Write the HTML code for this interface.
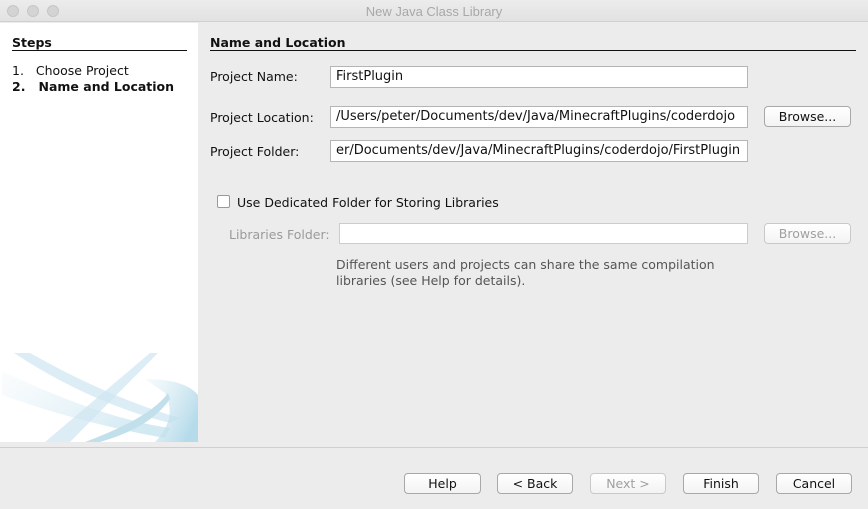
<!DOCTYPE html>
<html><head><style>
*{margin:0;padding:0;box-sizing:border-box}
body{width:868px;height:509px;background:#ececec;font-family:"DejaVu Sans","Liberation Sans",sans-serif;font-size:12.5px;color:#111;position:relative;overflow:hidden}
.a{position:absolute;white-space:nowrap}
.tb{left:0;top:0;width:868px;height:22px;background:linear-gradient(#ececec,#e2e2e2);border-bottom:1px solid #d0d0d0}
.dot{width:12px;height:12px;border-radius:50%;background:#d4d4d4;border:1px solid #c6c6c6;top:5px}
.inp{background:#fff;border:1px solid #b5b5b5;height:22px;padding:2px 5px;line-height:16px;overflow:hidden;font-size:13px}
.btn{background:linear-gradient(#fff,#f3f3f3);border:1px solid #a8a8a8;border-radius:4px;height:21px;text-align:center;line-height:19px;font-size:12.5px}
.dis{color:#a0a0a0;border-color:#c9c9c9}
</style></head><body>
<div class="a tb"></div>
<div class="a dot" style="left:7px"></div>
<div class="a dot" style="left:27px"></div>
<div class="a dot" style="left:47px"></div>
<div class="a" style="left:0;width:868px;top:4px;text-align:center;color:#a8a8a8;font-family:'Liberation Sans',sans-serif;font-size:13px">New Java Class Library</div>

<div class="a" style="left:0;top:23px;width:198px;height:419px;background:#fff;overflow:hidden">
<svg width="198" height="419" style="position:absolute;left:0;top:0">
<defs><linearGradient id="g" x1="0" x2="1" y1="0" y2="0.6"><stop offset="0" stop-color="#d8ebf4" stop-opacity="0.2"/><stop offset="1" stop-color="#b5dbea"/></linearGradient></defs>
<path d="M2 348 Q100 395 170 405 L165 415 Q80 400 2 372Z" fill="url(#g)" opacity="0.6"/>
<path d="M14 330 L30 330 Q110 375 180 395 L170 400 Q90 380 14 330Z" fill="#cde6f1" opacity="0.7"/>
<path d="M45 419 L150 330 L158 330 L70 419Z" fill="#cfe6f1" opacity="0.7"/>
<path d="M145 356 Q185 356 198 372 L198 419 L155 419 Q178 395 165 370Z" fill="url(#g)"/>
<path d="M85 419 Q150 395 168 370 L170 376 Q150 405 100 419Z" fill="#c2e0ec"/>
</svg>
</div>

<div class="a" style="left:12px;top:35px;font-weight:bold">Steps</div>
<div class="a" style="left:12px;top:50px;width:175px;height:1px;background:#111"></div>
<div class="a" style="left:12px;top:63px">1.&nbsp;&nbsp;&nbsp;Choose Project</div>
<div class="a" style="left:12px;top:79px;font-weight:bold">2.&nbsp;&nbsp;&nbsp;Name and Location</div>

<div class="a" style="left:210px;top:35px;font-weight:bold">Name and Location</div>
<div class="a" style="left:210px;top:50px;width:646px;height:1px;background:#111"></div>

<div class="a" style="left:210px;top:69px">Project Name:</div>
<div class="a inp" style="left:330px;top:66px;width:418px">FirstPlugin</div>
<div class="a" style="left:210px;top:110px">Project Location:</div>
<div class="a inp" style="left:330px;top:106px;width:418px">/Users/peter/Documents/dev/Java/MinecraftPlugins/coderdojo</div>
<div class="a btn" style="left:764px;top:106px;width:87px">Browse...</div>
<div class="a" style="left:210px;top:144px">Project Folder:</div>
<div class="a inp" style="left:330px;top:140px;width:418px;direction:rtl;text-align:left">er/Documents/dev/Java/MinecraftPlugins/coderdojo/FirstPlugin</div>

<div class="a" style="left:217px;top:195px;width:13px;height:13px;border:1px solid #999;border-radius:2px;background:#fff"></div>
<div class="a" style="left:237px;top:195px">Use Dedicated Folder for Storing Libraries</div>
<div class="a" style="left:229px;top:227px;color:#9a9a9a">Libraries Folder:</div>
<div class="a inp" style="left:339px;top:223px;width:409px;height:21px;border-color:#ccc"></div>
<div class="a btn dis" style="left:764px;top:223px;width:87px">Browse...</div>
<div class="a" style="left:336px;top:257px;color:#555;line-height:16px">Different users and projects can share the same compilation<br>libraries (see Help for details).</div>

<div class="a" style="left:0;top:447px;width:868px;height:1px;background:#cfcfcf"></div>
<div class="a btn" style="left:404px;top:473px;width:77px">Help</div>
<div class="a btn" style="left:497px;top:473px;width:76px">&lt; Back</div>
<div class="a btn dis" style="left:590px;top:473px;width:76px">Next &gt;</div>
<div class="a btn" style="left:683px;top:473px;width:76px">Finish</div>
<div class="a btn" style="left:776px;top:473px;width:76px">Cancel</div>
</body></html>
